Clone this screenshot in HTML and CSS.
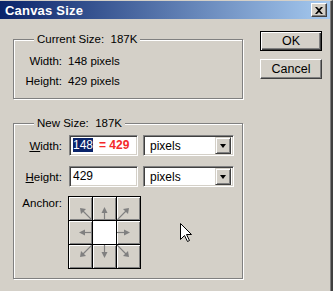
FILE: index.html
```html
<!DOCTYPE html>
<html lang="en">
<head>
  <meta charset="UTF-8" />
  <title>Canvas Size</title>
  <link rel="stylesheet" href="styles.css">
</head>
<body>
  <div class="window">
    <div class="titlebar">
      <span class="title">Canvas Size</span>
      <span class="close">
        <svg width="8" height="7" viewBox="0 0 8 7"><path d="M0 0h2l2 2 2-2h2L5 3.5 8 7H6L4 5 2 7H0l3-3.5z" fill="#000"/></svg>
      </span>
    </div>

    <div class="body">
      <div class="left">
        <div class="group current">
          <span class="legend">Current Size:&nbsp; 187K</span>
          <div class="row"><span class="label">Width:</span><span class="value">148 pixels</span></div>
          <div class="row"><span class="label">Height:</span><span class="value">429 pixels</span></div>
        </div>

        <div class="group new">
          <span class="legend">New Size:&nbsp; 187K</span>
          <div class="field first">
            <span class="label"><u>W</u>idth:</span>
            <div class="input"><span class="sel">148</span><span class="calc">= 429</span></div>
            <div class="select"><span>pixels</span><span class="drop"><i></i></span></div>
          </div>
          <div class="field">
            <span class="label"><u>H</u>eight:</span>
            <div class="input">429</div>
            <div class="select"><span>pixels</span><span class="drop"><i></i></span></div>
          </div>
          <div class="anchor-row">
            <span class="label">Anchor:</span>
            <div class="anchor">
              <div class="cell"><svg viewBox="0 0 23 23"><path d="M23 23L13 13" /><path class="head" d="M11 11l6 1-5 5z"/></svg></div>
              <div class="cell"><svg viewBox="0 0 23 23"><path d="M11.5 23V14" /><path class="head" d="M11.5 10l3 6h-6z"/></svg></div>
              <div class="cell"><svg viewBox="0 0 23 23"><path d="M0 23L10 13" /><path class="head" d="M12 11l-6 1 5 5z"/></svg></div>
              <div class="cell"><svg viewBox="0 0 23 23"><path d="M23 11.5H14" /><path class="head" d="M10 11.5l6-3v6z"/></svg></div>
              <div class="cell center"></div>
              <div class="cell"><svg viewBox="0 0 23 23"><path d="M0 11.5H9" /><path class="head" d="M13 11.5l-6-3v6z"/></svg></div>
              <div class="cell"><svg viewBox="0 0 23 23"><path d="M23 0L13 10" /><path class="head" d="M11 12l6-1-5-5z"/></svg></div>
              <div class="cell"><svg viewBox="0 0 23 23"><path d="M11.5 0V9" /><path class="head" d="M11.5 13l3-6h-6z"/></svg></div>
              <div class="cell"><svg viewBox="0 0 23 23"><path d="M0 0L10 10" /><path class="head" d="M12 12l-6-1 5-5z"/></svg></div>
            </div>
          </div>
        </div>
      </div>

      <div class="buttons">
        <div class="btn default">OK</div>
        <div class="btn">Cancel</div>
      </div>
    </div>

    <svg class="cursor" width="12" height="19" viewBox="0 0 12 19">
      <path d="M0.5 0.5V16.5L4.5 12.5L7.5 18.5L9.5 17.5L6.5 11.5H11.5Z" fill="#fff" stroke="#000" stroke-width="1"/>
    </svg>
  </div>
</body>
</html>
```

FILE: styles.css
```css
* {
  margin: 0;
  padding: 0;
  box-sizing: border-box;
}

body {
  background: #d4d0c8;
  font-family: 'Liberation Sans', Arial, sans-serif;
  font-size: 11.5px;
  color: #000;
}

.window {
  position: relative;
  width: 333px;
  height: 291px;
  background: #d4d0c8;
  border-top: 1px solid #d4d0c8;
  border-right: 2px solid #404040;
  box-shadow: inset -1px 0 0 #808080;
  overflow: hidden;
}

.titlebar {
  height: 18px;
  margin-right: 1px;
  display: flex;
  align-items: center;
  justify-content: space-between;
  padding: 0 3px 0 5px;
  background: linear-gradient(to right, #0a246a, #a6caf0);
}

.title {
  color: #fff;
  font-weight: bold;
  font-size: 13px;
  letter-spacing: 0.2px;
}

.close {
  width: 16px;
  height: 14px;
  display: flex;
  align-items: center;
  justify-content: center;
  background: #d4d0c8;
  border: 1px solid;
  border-color: #fff #404040 #404040 #fff;
  box-shadow: inset -1px -1px 0 #808080;
}

.body {
  display: flex;
}

.left {
  width: 230px;
  margin-left: 13px;
  padding-top: 20px;
}

.group {
  border: 1px solid #808080;
  box-shadow: 1px 1px 0 #fff, inset 1px 1px 0 #fff;
}

.group.current {
  height: 60px;
}

.group.new {
  height: 156px;
  margin-top: 24px;
}

.legend {
  display: table;
  line-height: 14px;
  margin: -8px 0 0 20px;
  padding: 0 3px;
  background: #d4d0c8;
}

.row {
  display: flex;
  height: 20px;
  align-items: center;
}

.row .label,
.field .label,
.anchor-row .label {
  width: 48px;
  text-align: right;
}

.row .value {
  margin-left: 6px;
}

.current .legend + .row {
  margin-top: 5px;
}

.field {
  display: flex;
  align-items: center;
  height: 21px;
  margin-top: 10px;
}

.field.first {
  margin-top: 5px;
}

.field .label {
  margin-right: 7px;
}

.input {
  width: 69px;
  height: 21px;
  padding: 2px 0 0 3px;
  background: #fff;
  border: 1px solid;
  border-color: #808080 #fff #fff #808080;
  box-shadow: inset 1px 1px 0 #404040, inset -1px -1px 0 #d4d0c8;
  font-size: 12px;
  line-height: 14px;
  white-space: nowrap;
}

.sel {
  background: #0a246a;
  color: #fff;
}

.calc {
  margin-left: 6px;
  color: #f42a2a;
  font-weight: bold;
}

.select {
  width: 91px;
  height: 21px;
  margin-left: 5px;
  display: flex;
  align-items: center;
  justify-content: space-between;
  padding: 2px 2px 2px 6px;
  background: #fff;
  border: 1px solid;
  border-color: #808080 #fff #fff #808080;
  box-shadow: inset 1px 1px 0 #404040, inset -1px -1px 0 #d4d0c8;
  font-size: 12px;
}

.drop {
  width: 16px;
  height: 17px;
  display: flex;
  align-items: center;
  justify-content: center;
  background: #d4d0c8;
  border: 1px solid;
  border-color: #d4d0c8 #404040 #404040 #d4d0c8;
  box-shadow: inset 1px 1px 0 #fff, inset -1px -1px 0 #808080;
}

.drop i {
  width: 0;
  height: 0;
  border-left: 3.5px solid transparent;
  border-right: 3.5px solid transparent;
  border-top: 4px solid #000;
}

.anchor-row {
  display: flex;
  margin-top: 9px;
}

.anchor-row .label {
  margin-top: 1px;
  margin-right: 6px;
}

.anchor {
  display: grid;
  grid-template-columns: repeat(3, 23px);
  grid-template-rows: repeat(3, 23px);
  gap: 1px;
  padding: 1px;
  background: #000;
  width: 73px;
}

.cell {
  background: #d4d0c8;
  box-shadow: inset 1px 1px 0 #fff, inset -1px -1px 0 #808080;
}

.cell svg {
  display: block;
  width: 23px;
  height: 23px;
}

.cell svg path {
  stroke: #808080;
  stroke-width: 1.2;
  fill: none;
}

.cell svg path.head {
  fill: #808080;
  stroke: none;
}

.cell.center {
  background: #fff;
  box-shadow: none;
}

.buttons {
  margin-left: 17px;
  padding-top: 12px;
  display: flex;
  flex-direction: column;
  gap: 8px;
}

.btn {
  width: 62px;
  height: 20px;
  display: flex;
  align-items: center;
  justify-content: center;
  font-size: 12.5px;
  border: 1px solid;
  border-color: #fff #404040 #404040 #fff;
  box-shadow: inset -1px -1px 0 #808080;
}

.btn.default {
  border-color: #000;
  box-shadow: inset 1px 1px 0 #fff, inset -1px -1px 0 #404040, inset -2px -2px 0 #808080;
}

.cursor {
  position: absolute;
  left: 180px;
  top: 222px;
}
```
